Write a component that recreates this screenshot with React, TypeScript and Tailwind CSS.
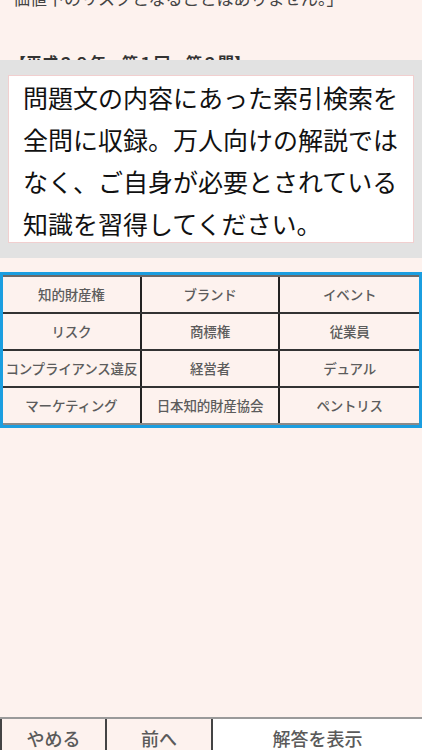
import React from 'react';

const keywords = [
  ['知的財産権', 'ブランド', 'イベント'],
  ['リスク', '商標権', '従業員'],
  ['コンプライアンス違反', '経営者', 'デュアル'],
  ['マーケティング', '日本知的財産協会', 'ペントリス'],
];

const KeywordGrid = () => (
  <div className="mt-[14px] border-[3px] border-[#1b9ee0]">
    <div className="border-t-2 border-[#6a6a6a]">
      {keywords.map((row, i) => (
        <div
          key={i}
          className={
            'grid grid-cols-3 h-[37px] border-b-2 ' +
            (i === keywords.length - 1 ? 'border-[#8a8a8a]' : 'border-[#333]')
          }
        >
          {row.map((word, j) => (
            <div
              key={word}
              className={
                'flex items-center justify-center whitespace-nowrap text-[13.5px] font-medium text-[#5c5c5c] tracking-[-0.2px] ' +
                (j < row.length - 1 ? 'border-r-2 border-[#222]' : '')
              }
            >
              {word}
            </div>
          ))}
        </div>
      ))}
    </div>
  </div>
);

const BottomBar = () => (
  <div className="mt-auto h-[33px] overflow-hidden border-t-2 border-[#9a9a9a] shrink-0">
    <div className="flex h-[38px] text-[18px] font-medium text-[#5a5a5a]">
      <button className="w-[107px] flex items-center justify-center border-x-2 border-[#444] bg-[#fdf2ee]">
        やめる
      </button>
      <button className="w-[106px] flex items-center justify-center border-r-2 border-[#444] bg-[#fdf2ee]">
        前へ
      </button>
      <button className="flex-1 flex items-center justify-center bg-white">
        解答を表示
      </button>
    </div>
  </div>
);

export default function App() {
  return (
    <div className="relative w-[422px] h-[750px] overflow-hidden bg-[#fdf2ee] flex flex-col font-['Noto_Sans_CJK_JP','Noto_Sans',sans-serif]">
      {/* question text behind the popup */}
      <div className="h-[258px] overflow-hidden shrink-0">
        <p className="mt-[-14px] pl-[13px] text-[17px] leading-[24px] text-[#444] whitespace-nowrap">
          価値下のリスクとなることはありません。」
        </p>
        <p className="mt-[40px] pl-[10px] text-[16px] leading-[24px] font-bold text-[#333] whitespace-nowrap">
          【平成２９年　第１回　第２問】
        </p>
      </div>

      {/* popup overlay */}
      <div className="absolute left-0 right-0 top-[60px] h-[198px] bg-[#e2e2e2] pt-[15px] px-[8px]">
        <div className="h-[168px] bg-white border border-[#f1cfcf] pl-[14px] pr-[6px] text-[25px] leading-[42px] text-[#111]">
          問題文の内容にあった索引検索を全問に収録。万人向けの解説ではなく、ご自身が必要とされている知識を習得してください。
        </div>
      </div>

      <KeywordGrid />

      <BottomBar />
    </div>
  );
}
